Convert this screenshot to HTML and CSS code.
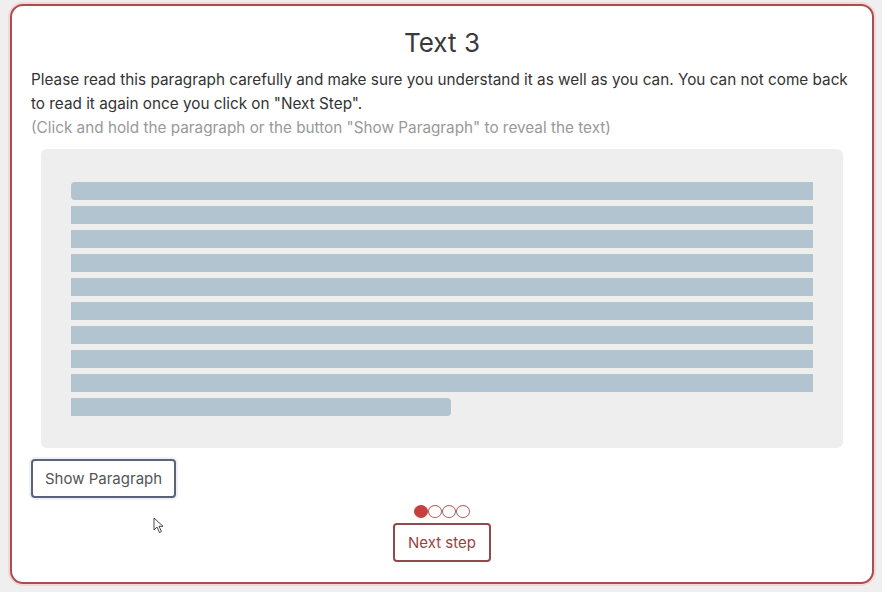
FILE: index.html
```html
<!DOCTYPE html>
<html lang="en">
<head>
<meta charset="utf-8">
<title>Text 3</title>
<link rel="stylesheet" href="styles.css">
</head>
<body>
<main class="card">
  <h1 class="title">Text 3</h1>
  <p class="intro">Please read this paragraph carefully and make sure you understand it as well as you can. You can not come back to read it again once you click on "Next Step".</p>
  <p class="hint">(Click and hold the paragraph or the button "Show Paragraph" to reveal the text)</p>
  <div class="paragraph">
    <div class="bar first"></div>
    <div class="bar"></div>
    <div class="bar"></div>
    <div class="bar"></div>
    <div class="bar"></div>
    <div class="bar"></div>
    <div class="bar"></div>
    <div class="bar"></div>
    <div class="bar"></div>
    <div class="bar last"></div>
  </div>
  <div class="show-row">
    <button class="btn show">Show Paragraph</button>
    <svg class="cursor" width="12" height="18" viewBox="0 0 12 18"><path d="M1 1 L1 13 L4 10 L6.5 15.5 L8.5 14.6 L6 9.3 L10 9.3 Z" fill="#fff" stroke="#333" stroke-width="0.9" stroke-linejoin="round"/></svg>
  </div>
  <div class="steps">
    <span class="dot on"></span><span class="dot"></span><span class="dot"></span><span class="dot"></span>
  </div>
  <div class="next-row">
    <button class="btn next">Next step</button>
  </div>
</main>
</body>
</html>
```
FILE: styles.css
```css
html, body {
  margin: 0;
  padding: 0;
}
body {
  background: #efefef;
  padding: 4px 8px 8px 10px;
  font-family: Inter, "Noto Sans", Roboto, sans-serif;
  color: #333;
}
.card {
  box-sizing: border-box;
  width: 864px;
  height: 580px;
  background: #fff;
  border: 2px solid #a5504f;
  border-radius: 13px;
  box-shadow: 0 0 0 2px #f6d6d6;
  padding: 20px 19px 0 19px;
  display: flex;
  flex-direction: column;
}
.title {
  margin: 0;
  text-align: center;
  font-size: 26px;
  font-weight: 400;
  line-height: 34px;
  color: #3a3a3a;
}
.intro {
  margin: 8px 0 0 0;
  font-size: 15.3px;
  line-height: 24px;
  color: #333;
}
.hint {
  margin: 0;
  font-size: 15.3px;
  line-height: 24px;
  color: #999;
}
.paragraph {
  margin: 9px 10px 0 10px;
  background: #eee;
  border-radius: 6px;
  padding: 33px 30px 32px 30px;
  display: flex;
  flex-direction: column;
  gap: 6px;
}
.bar {
  height: 18px;
  background: #b1c4cf;
}
.bar.first {
  border-radius: 4px 0 0 4px;
}
.bar.last {
  width: 380px;
  border-radius: 0 4px 4px 0;
}
.show-row {
  position: relative;
  margin-top: 11px;
  display: flex;
  align-items: flex-start;
}
.btn {
  font-family: Inter, "Noto Sans", Roboto, sans-serif;
  font-size: 15px;
  background: #fff;
  border-radius: 4px;
  cursor: pointer;
  height: 39px;
  padding: 0 12px;
}
.show {
  border: 2px solid #5d6276;
  color: #555;
  box-shadow: 0 0 0 2px #eef1f5;
}
.cursor {
  position: absolute;
  left: 122px;
  top: 58px;
}
.steps {
  margin-top: 7px;
  display: flex;
  justify-content: center;
}
.dot {
  box-sizing: border-box;
  width: 14px;
  height: 13px;
  border: 1px solid #a86060;
  border-radius: 50%;
}
.dot.on {
  background: #c8403e;
  border-color: #c8403e;
}
.next-row {
  margin-top: 5px;
  display: flex;
  justify-content: center;
}
.next {
  border: 2px solid #8e4a4c;
  color: #9d3f40;
  padding: 0 13px;
}
```
